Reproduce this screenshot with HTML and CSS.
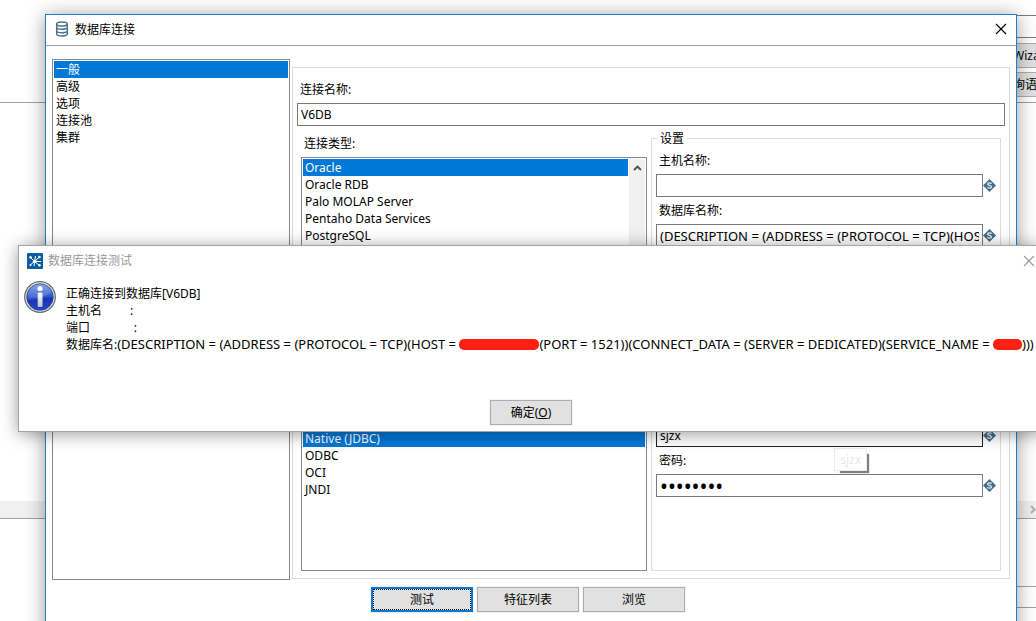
FILE: index.html
```html
<!DOCTYPE html>
<html lang="zh-CN">
<head>
<meta charset="utf-8">
<title>数据库连接</title>
<link rel="stylesheet" href="styles.css">
</head>
<body>
<svg class="symbols" aria-hidden="true">
  <symbol id="variable" viewBox="0 0 13 13">
    <path d="M6.5 0 13 6.5 6.5 13 0 6.5Z" fill="#456d8a"/>
    <path d="M8.5 4.6C7.9 3.5 4.6 3.4 4.6 5C4.6 6.9 8.5 6 8.5 8C8.5 9.6 5 9.5 4.4 8.3" fill="none" stroke="#e4edf3" stroke-width="1.3"/>
  </symbol>
</svg>

<div class="app">
  <div class="app-top">
    <div class="app-strip"></div>
    <button class="app-button" type="button">Wiza</button>
    <button class="app-button" type="button">询语</button>
  </div>
  <div class="app-grid"></div>
  <div class="app-scroll">
    <svg width="6" height="9" viewBox="0 0 6 9"><path d="M1 1 4.5 4.5 1 8" fill="none" stroke="#b0b0b0" stroke-width="2"/></svg>
  </div>
  <div class="app-log"></div>
  <div class="app-status"></div>
</div>

<main class="window">
  <header class="titlebar">
    <svg width="14" height="16" viewBox="0 0 14 16" fill="none" stroke="#4c7391" stroke-width="1.5">
      <ellipse cx="7" cy="3" rx="5.3" ry="2.1"/>
      <path d="M1.7 3V13C1.7 15.7 12.3 15.7 12.3 13V3M1.7 6.3C1.7 9 12.3 9 12.3 6.3M1.7 9.7C1.7 12.4 12.3 12.4 12.3 9.7"/>
    </svg>
    <h1 class="title">数据库连接</h1>
    <button class="close" type="button" aria-label="关闭"><svg width="12" height="12" viewBox="0 0 12 12"><path d="M1 1 11 11M11 1 1 11" stroke="#000" stroke-width="1.1"/></svg></button>
  </header>

  <div class="content">
    <ul class="list nav" role="listbox" aria-label="数据库连接">
      <li class="row selected" role="option" aria-selected="true">一般</li>
      <li class="row" role="option">高级</li>
      <li class="row" role="option">选项</li>
      <li class="row" role="option">连接池</li>
      <li class="row" role="option">集群</li>
    </ul>

    <section class="panel">
      <label class="label" for="name">连接名称:</label>
      <input class="input" id="name" type="text" value="V6DB">
      <div class="columns">
        <div class="types">
          <div class="label" id="type-label">连接类型:</div>
          <div class="list scroll-list">
            <ul class="rows" role="listbox" aria-labelledby="type-label">
              <li class="row selected" role="option" aria-selected="true">Oracle</li>
              <li class="row" role="option">Oracle RDB</li>
              <li class="row" role="option">Palo MOLAP Server</li>
              <li class="row" role="option">Pentaho Data Services</li>
              <li class="row" role="option">PostgreSQL</li>
            </ul>
            <div class="scrollbar"><svg width="9" height="6" viewBox="0 0 9 6"><path d="M1 5 4.5 1.5 8 5" fill="none" stroke="#505050" stroke-width="1.8"/></svg></div>
          </div>
          <ul class="list access" role="listbox" aria-label="JDBC">
            <li class="row selected" role="option" aria-selected="true">Native (JDBC)</li>
            <li class="row" role="option">ODBC</li>
            <li class="row" role="option">OCI</li>
            <li class="row" role="option">JNDI</li>
          </ul>
        </div>

        <fieldset class="settings">
          <legend class="legend">设置</legend>
          <div class="fields">
            <div class="field">
              <label class="label" for="host">主机名称:</label>
              <div class="entry"><input class="input" id="host" type="text"><svg class="variable"><use href="#variable"/></svg></div>
            </div>
            <div class="field">
              <label class="label" for="database">数据库名称:</label>
              <div class="entry"><input class="input descriptor" id="database" type="text" value="(DESCRIPTION = (ADDRESS = (PROTOCOL = TCP)(HOST = "><svg class="variable"><use href="#variable"/></svg></div>
            </div>
            <div class="field user">
              <div class="label"></div>
              <div class="entry"><input class="input hovered" type="text" value="sjzx" aria-label="sjzx"><svg class="variable"><use href="#variable"/></svg></div>
            </div>
            <div class="field secret">
              <label class="label" for="password">密码:</label>
              <div class="entry"><input class="input password" id="password" type="password" value="12345678"><svg class="variable"><use href="#variable"/></svg></div>
              <div class="tooltip" role="tooltip">sjzx</div>
            </div>
          </div>
        </fieldset>
      </div>
    </section>
  </div>

  <footer class="actions">
    <button class="button focused" type="button">测试</button>
    <button class="button" type="button">特征列表</button>
    <button class="button" type="button">浏览</button>
  </footer>
</main>

<section class="dialog" role="dialog" aria-labelledby="dialog-title">
  <header class="dialog-bar">
    <svg width="16" height="16" viewBox="0 0 16 16">
      <rect width="16" height="16" rx="1" fill="#0b5ca5"/>
      <path d="M7.5 8.5 3 4M7.5 8.5 8.5 3M7.5 8.5 13 3.5M7.5 8.5H14M7.5 8.5 12.5 12.5M7.5 8.5 7 13M7.5 8.5 3 12" stroke="#fff" stroke-width="1"/>
      <g fill="#fff"><circle cx="3.5" cy="4.3" r="1.2"/><circle cx="12.5" cy="4" r="1.2"/><circle cx="12.5" cy="12.2" r="1.2"/><circle cx="3.5" cy="12" r="1.1"/><circle cx="7.6" cy="8.4" r="1.8"/></g>
    </svg>
    <h2 class="title" id="dialog-title">数据库连接测试</h2>
    <button class="close" type="button" aria-label="关闭"><svg width="12" height="12" viewBox="0 0 12 12"><path d="M1 1 11 11M11 1 1 11" stroke="#999" stroke-width="1.1"/></svg></button>
  </header>
  <div class="message">
    <svg class="info" width="32" height="32" viewBox="0 0 32 32">
      <defs>
        <linearGradient id="ball" x1="0" y1="0" x2="0" y2="1"><stop offset="0" stop-color="#6f93e6"/><stop offset="0.5" stop-color="#2d52c6"/><stop offset="0.55" stop-color="#1634ae"/><stop offset="1" stop-color="#2547d0"/></linearGradient>
        <linearGradient id="stem" x1="0" y1="0" x2="0" y2="1"><stop offset="0" stop-color="#fff"/><stop offset="1" stop-color="#bfc2cc"/></linearGradient>
      </defs>
      <circle cx="16" cy="16" r="15.3" fill="#e6e6e6" stroke="#707070" stroke-width="1.3"/>
      <circle cx="16" cy="16" r="13.3" fill="url(#ball)" stroke="#24409c" stroke-width="0.7"/>
      <path d="M4 19A12.4 12.4 0 0 1 27.5 11.2Q18 18 4 19Z" fill="#fff" opacity="0.16"/>
      <circle cx="16" cy="7.5" r="2.6" fill="#fff"/>
      <rect x="13.7" y="11.5" width="4.8" height="14.5" rx="1.2" fill="url(#stem)"/>
    </svg>
    <div class="lines">
      <p class="line">正确连接到数据库[V6DB]</p>
      <p class="line">主机名         :</p>
      <p class="line">端口              :</p>
      <p class="line">数据库名:<span class="descriptor">(DESCRIPTION = (ADDRESS = (PROTOCOL = TCP)(HOST = <span class="redacted wide"></span>(PORT = 1521))(CONNECT_DATA = (SERVER = DEDICATED)(SERVICE_NAME = <span class="redacted"></span>)))</span></p>
    </div>
  </div>
  <button class="button confirm" type="button">确定(<u>O</u>)</button>
</section>
</body>
</html>
```
FILE: styles.css
```css
* {
  box-sizing: border-box;
}

body {
  position: relative;
  height: 100vh;
  margin: 0;
  overflow: hidden;
  background: #fff;
  color: #000;
  font: 12px/17px "Noto Sans", "Noto Sans CJK SC", sans-serif;
}

h1,
h2,
p,
ul {
  margin: 0;
  padding: 0;
}

ul {
  list-style: none;
}

button,
input {
  font: inherit;
  color: inherit;
}

svg {
  display: block;
  flex: none;
}

.symbols {
  position: absolute;
  width: 0;
  height: 0;
}

/* Application behind the dialogs */
.app {
  display: flex;
  flex-direction: column;
  height: 100%;
}

.app-top {
  display: flex;
  flex-direction: column;
  align-items: flex-end;
  gap: 4px;
  height: 103px;
  padding-top: 15px;
  border-bottom: 1px solid #a0a0a5;
}

.app-strip {
  width: 40px;
  height: 23px;
  margin-bottom: 1px;
  border: 1px solid #7a7a7a;
  border-width: 1px 0;
}

.app-button {
  width: 40px;
  height: 25px;
  padding: 0 0 0 16px;
  overflow: hidden;
  border: 1px solid #adadad;
  border-right: 0;
  background: #e1e1e1;
  text-align: left;
  white-space: nowrap;
}

.app-grid {
  flex: 1;
}

.app-scroll {
  display: flex;
  align-items: center;
  justify-content: flex-end;
  height: 17px;
  background: #f0f0f0;
  box-shadow: 0 1px 0 #a0a0a5;
}

.app-log {
  height: 69px;
  margin-left: 45px;
  border-bottom: 1px solid #a0a0a5;
}

.app-status {
  height: 34px;
  margin-left: 45px;
}

.app-status::before {
  content: "";
  display: block;
  height: 20px;
  border-bottom: 1px solid #a0a0a5;
}

/* Connection window */
.window {
  position: absolute;
  top: 14px;
  right: 19px;
  bottom: -20px;
  left: 45px;
  display: flex;
  flex-direction: column;
  border: 1px solid #1b80cf;
  background: #fff;
  box-shadow: 0 2px 18px rgba(0, 0, 0, 0.4);
}

.titlebar {
  display: flex;
  align-items: center;
  gap: 6px;
  height: 31px;
  padding: 0 9px 2px;
  border-bottom: 1px solid #a0a0a0;
}

.title {
  flex: 1;
  font-size: 12px;
  font-weight: 400;
}

.close {
  padding: 0;
  border: 0;
  background: none;
}

.content {
  display: flex;
  flex: 1;
  gap: 2px;
  padding: 13px 6px 0;
}

.list {
  padding: 1px;
  border: 1px solid #828790;
  background: #fff;
}

.nav {
  width: 238px;
}

.row {
  height: 17px;
  padding: 0 2px;
}

.selected {
  background: #0078d7;
  color: #fff;
}

.panel {
  display: flex;
  flex: 1;
  flex-direction: column;
  min-width: 0;
  margin: 8px 0 1px;
  padding: 13px 4px 7px;
  border: 1px solid #dcdcdc;
}

.label {
  display: block;
  height: 17px;
  margin-bottom: 5px;
  padding-left: 3px;
}

.input {
  width: 100%;
  min-width: 0;
  height: 23px;
  padding: 0 3px;
  border: 1px solid #7a7a7a;
  border-radius: 0;
  outline: 0;
  background: #fff;
}

.hovered {
  border-color: #222;
}

.descriptor {
  font-size: 13px;
}

.password {
  font-size: 21px;
}

.columns {
  display: grid;
  flex: 1;
  grid-template-columns: 346fr 350fr;
  gap: 4px;
  padding: 4px 4px 0;
}

.types {
  display: flex;
  flex-direction: column;
  min-width: 0;
  padding-top: 5px;
}

.scroll-list {
  display: flex;
  flex: 1;
  margin-bottom: 31px;
}

.rows {
  flex: 1;
  padding-right: 1px;
}

.scrollbar {
  display: flex;
  justify-content: center;
  width: 16px;
  padding-top: 6px;
  background: #f0f0f0;
}

.access {
  height: 143px;
}

.settings {
  min-width: 0;
  margin: 0;
  padding: 5px 4px 0;
  border: 1px solid #dcdcdc;
}

.legend {
  margin-left: 1px;
  padding: 0 3px;
}

.fields {
  display: grid;
  grid-template-rows: repeat(7, 50px);
}

.field {
  position: relative;
  min-width: 0;
}

.user {
  grid-row: 6;
}

.secret {
  grid-row: 7;
}

.entry {
  display: flex;
  align-items: center;
}

.entry .input {
  flex: 1;
}

.variable {
  width: 13px;
  height: 13px;
}

.tooltip {
  position: absolute;
  top: -4px;
  right: 129px;
  padding: 2px 5px;
  border: 1px solid #ededed;
  background: #fff;
  color: #e8e8e8;
  box-shadow: 4px 4px 1px -2px #808080;
}

.actions {
  display: flex;
  justify-content: center;
  gap: 4px;
  padding: 7px 6px 28px 0;
}

.button {
  width: 102px;
  height: 25px;
  padding: 0;
  border: 1px solid #adadad;
  background: #e1e1e1;
  box-shadow: 0 0 0 1px #f3f3f3;
}

.focused {
  border: 2px solid #0078d7;
  outline: 1px dotted #000;
  outline-offset: -3px;
}

/* Test result dialog */
.dialog {
  position: absolute;
  top: 245px;
  right: -8px;
  left: 18px;
  display: flex;
  flex-direction: column;
  padding-bottom: 6px;
  border: 1px solid #a5a5a5;
  background: #fff;
  box-shadow: 0 2px 16px rgba(0, 0, 0, 0.4);
}

.dialog-bar {
  display: flex;
  align-items: center;
  gap: 5px;
  height: 29px;
  padding: 0 8px;
  color: #999;
}

.message {
  display: flex;
  gap: 10px;
  padding: 6px 0 0 5px;
}

.lines {
  padding-top: 4px;
}

.line {
  height: 17px;
  white-space: pre;
}

.redacted {
  display: inline-block;
  width: 29px;
  height: 11px;
  border-radius: 5px;
  background: #ff2013;
  vertical-align: -1px;
}

.wide {
  width: 80px;
}

.confirm {
  align-self: center;
  width: 82px;
  margin-top: 47px;
}
```
